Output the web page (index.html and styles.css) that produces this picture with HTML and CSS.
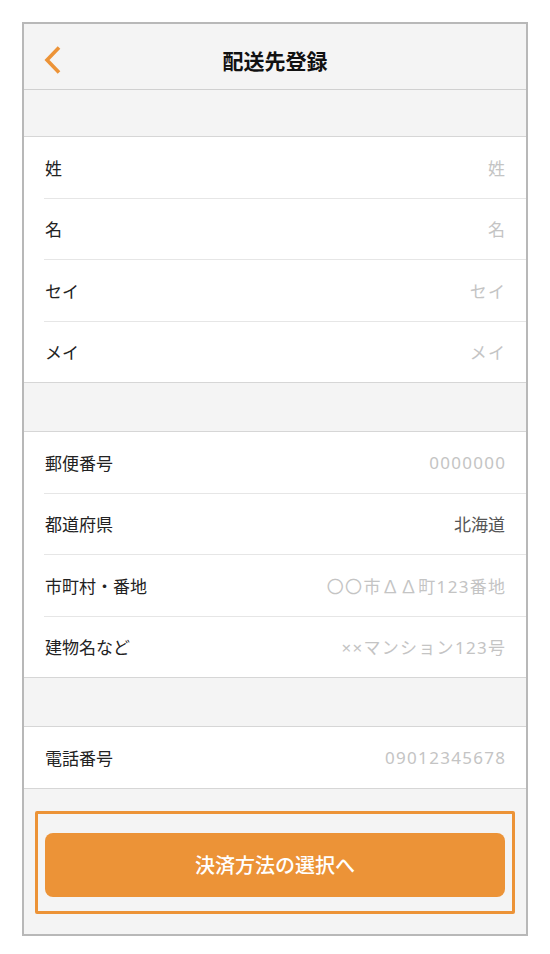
FILE: index.html
```html
<!DOCTYPE html>
<html lang="ja">
<head>
    <meta charset="UTF-8">
    <meta name="viewport" content="width=device-width, initial-scale=1.0">
    <title>配送先登録</title>
    <link rel="stylesheet" href="styles.css">
</head>
<body>

<div class="screen">
    <header class="nav">
        <a class="back" href="#" aria-label="戻る">
            <svg width="18" height="30" viewBox="0 0 18 30">
                <polyline points="15,2.5 3,15 15,27.5" fill="none" stroke="#ec9337" stroke-width="3.6"/>
            </svg>
        </a>
        <h1>配送先登録</h1>
        <span></span>
    </header>

    <div class="spacer"></div>

    <section class="group">
        <div class="row"><span class="label">姓</span><span class="value placeholder">姓</span></div>
        <div class="row"><span class="label">名</span><span class="value placeholder">名</span></div>
        <div class="row"><span class="label">セイ</span><span class="value placeholder">セイ</span></div>
        <div class="row"><span class="label">メイ</span><span class="value placeholder">メイ</span></div>
    </section>

    <div class="spacer tall"></div>

    <section class="group">
        <div class="row"><span class="label">郵便番号</span><span class="value placeholder">0000000</span></div>
        <div class="row"><span class="label">都道府県</span><span class="value">北海道</span></div>
        <div class="row"><span class="label">市町村・番地</span><span class="value placeholder">〇〇市∆∆町123番地</span></div>
        <div class="row"><span class="label">建物名など</span><span class="value placeholder">××マンション123号</span></div>
    </section>

    <div class="spacer tall"></div>

    <section class="group">
        <div class="row"><span class="label">電話番号</span><span class="value placeholder">09012345678</span></div>
    </section>

    <footer class="actions">
        <div class="highlight">
            <button class="submit">決済方法の選択へ</button>
        </div>
    </footer>
</div>

</body>
</html>
```

FILE: styles.css
```css
body {
    font-family: "Noto Sans CJK JP", "Noto Sans", sans-serif;
    margin: 0;
    padding: 22px;
    background: #fff;
    color: #222;
}

.screen {
    border: 2px solid #b8b8b8;
    background: #f4f4f4;
    height: 914px;
    box-sizing: border-box;
    display: flex;
    flex-direction: column;
}

.nav {
    height: 66px;
    box-sizing: border-box;
    padding-top: 6px;
    border-bottom: 1px solid #d0d0d0;
    display: grid;
    grid-template-columns: 1fr auto 1fr;
    align-items: center;
}

.back {
    display: flex;
    padding-left: 20px;
}

.nav h1 {
    margin: 0;
    font-size: 21px;
    font-weight: bold;
    color: #111;
}

.spacer {
    height: 46px;
}

.spacer.tall {
    height: 48px;
}

.group {
    background: #fff;
    border-top: 1px solid #d6d6d6;
    border-bottom: 1px solid #d6d6d6;
}

.row {
    height: 60.5px;
    margin-left: 20px;
    padding: 0 21px 0 1px;
    border-bottom: 1px solid #e6e6e6;
    display: flex;
    justify-content: space-between;
    align-items: center;
    font-size: 17px;
}

.row:last-child {
    border-bottom: none;
}

.value {
    color: #555;
}

.placeholder {
    font-family: "Noto Sans", "Noto Sans CJK JP", sans-serif;
    color: #c4c4c4;
    letter-spacing: 1.3px;
    margin-right: -1.3px;
}

.actions {
    flex: 1;
    padding: 22px 11px 0 11px;
}

.highlight {
    border: 3px solid #ec9337;
    border-radius: 2px;
    padding: 19px 7px 14px 7px;
}

.submit {
    display: block;
    width: 100%;
    height: 64px;
    border: none;
    border-radius: 8px;
    background-color: #ec9337;
    color: #fff;
    font-family: inherit;
    font-size: 20px;
    font-weight: 500;
    cursor: pointer;
}
```
